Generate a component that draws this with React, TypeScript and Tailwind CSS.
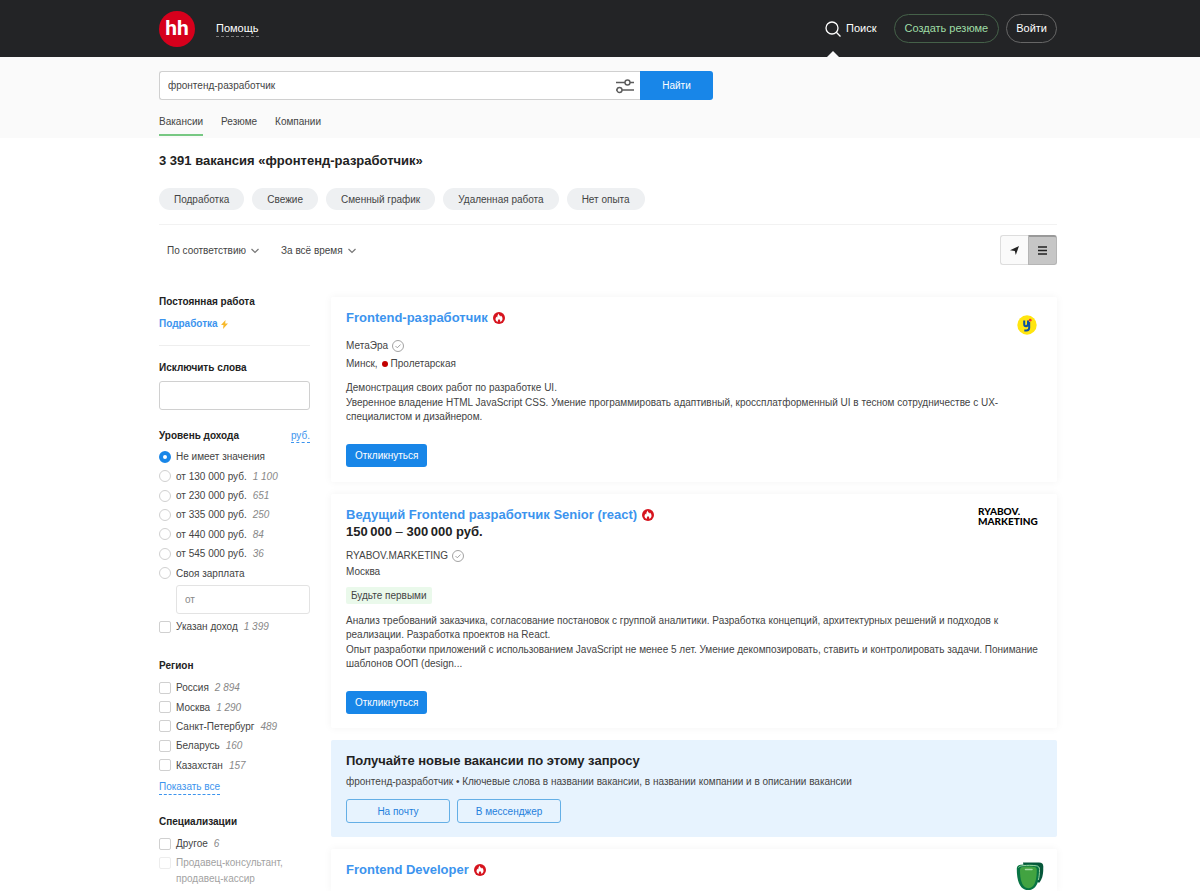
import React from "react";

type FilterItem = {
  label: string;
  count?: string;
  checked?: boolean;
};

const tabs = ["Вакансии", "Резюме", "Компании"];

const chips = ["Подработка", "Свежие", "Сменный график", "Удаленная работа", "Нет опыта"];

const incomes: FilterItem[] = [
  { label: "Не имеет значения", checked: true },
  { label: "от 130 000 руб.", count: "1 100" },
  { label: "от 230 000 руб.", count: "651" },
  { label: "от 335 000 руб.", count: "250" },
  { label: "от 440 000 руб.", count: "84" },
  { label: "от 545 000 руб.", count: "36" },
  { label: "Своя зарплата" },
];

const regions: FilterItem[] = [
  { label: "Россия", count: "2 894" },
  { label: "Москва", count: "1 290" },
  { label: "Санкт-Петербург", count: "489" },
  { label: "Беларусь", count: "160" },
  { label: "Казахстан", count: "157" },
];

const Container = ({ children, className = "" }: { children: React.ReactNode; className?: string }) => (
  <div className={`mx-auto w-full max-w-[914px] pl-4 ${className}`}>{children}</div>
);

const SearchIcon = () => (
  <svg className="size-4" viewBox="0 0 16 16" fill="none" stroke="currentColor" strokeWidth="1.3">
    <circle cx="7" cy="7" r="6" />
    <path d="M11.3 11.3 15.5 15.5" />
  </svg>
);

const SlidersIcon = () => (
  <svg className="h-4 w-[18px]" viewBox="0 0 18 16" fill="none" stroke="#5c5c5c" strokeWidth="1.4">
    <path d="M0 4.5h9M14 4.5h4M0 12h1M6 12h12" />
    <circle cx="11.5" cy="4.5" r="2.5" />
    <circle cx="3.5" cy="12" r="2.5" />
  </svg>
);

const ChevronIcon = () => (
  <svg className="size-2" viewBox="0 0 8 8" fill="none" stroke="#777" strokeWidth="1.2">
    <path d="M0.5 3 4 6.500 7.5 3" />
  </svg>
);

const FireIcon = () => (
  <svg className="size-3 shrink-0" viewBox="0 0 12 12">
    <circle cx="6" cy="6" r="6" fill="#d6141e" />
    <path
      d="M5.6 1.6c.2 1.5 1.1 2 1.9 3 .2-.3.3-.6.3-1C9 4.6 9.6 5.7 9.5 7c-.1 1.5-1 2.5-2.2 2.9.3-1.1-.2-2-1.3-3-.9.9-1.5 1.9-1.2 3C3.4 9.4 2.5 8.4 2.5 7c0-1 .5-1.8 1.2-2.5 0 .5.1.8.4 1.1C4.3 4 4.8 2.7 5.6 1.6Z"
      fill="#fff"
    />
  </svg>
);

const VerifiedIcon = () => (
  <svg className="size-3 shrink-0" viewBox="0 0 12 12" fill="none" stroke="#999" strokeWidth="0.9">
    <circle cx="6" cy="6" r="5.5" />
    <path d="M3.5 6 5.3 7.8 8.6 4.5" />
  </svg>
);

const YLogo = () => (
  <svg className="mt-[6px] mr-[5px] size-5 shrink-0" viewBox="0 0 20 20">
    <circle cx="10" cy="10" r="9.7" fill="#ffe50f" />
    <path
      d="M7.2 5.5v3.7c0 1.3.7 2 1.8 2 1.300 0 2-.8 2-2.100V5.500M12.200 7v5.800c0 1.800-1.100 2.700-2.800 2.700H7.300"
      fill="none"
      stroke="#0d4ea2"
      strokeWidth="2"
    />
    <circle cx="13.2" cy="5.2" r="1.400" fill="#ee3b2f" />
  </svg>
);

const ShieldLogo = () => (
  <svg className="mt-px -mr-0.5 size-7 shrink-0" viewBox="0 0 28 28">
    <path d="M7 .5h16c3 0 4.300 1.500 4.300 4 0 6-.3 12-4.300 16.500L8 6Z" fill="#06573a" />
    <path d="M.8 7c0-2.500 1.200-4 3.700-4.300 5-.7 10.500-.7 15.500 0 2.500.3 3.700 1.800 3.700 4.300 0 12-3 18.500-8 20.600-2.200.8-4.700.8-6.900 0C3.800 25.500.8 19 .8 7Z" fill="#087443" />
    <path d="M4 7.800C4 6.200 4.800 5.300 6.400 5c4-.6 8-.6 12 0 1.600.3 2.400 1.200 2.400 2.800 0 10-2 15.700-5.600 17.800-1.800.8-3.800.8-5.600 0C6 23.500 4 17.800 4 7.800Z" fill="#42a341" />
    <path d="M2.500 5.500c1-1.300 2.500-1.600 4.500-1.800 4.500-.5 9-.5 13.500.1 2 .3 3 1.500 3 3.700 0 4-.3 7.500-1.200 10.500" fill="none" stroke="#9bd3a3" strokeWidth="1" />
    <path d="M9.500 7.500h6.500" stroke="#a5dba5" strokeWidth="1.500" strokeLinecap="round" />
  </svg>
);

const Filter = ({ item, type, name }: { item: FilterItem; type: "radio" | "checkbox"; name: string }) => (
  <label className="flex items-center">
    <input
      type={type}
      name={name}
      defaultChecked={item.checked}
      className={
        type === "radio"
          ? "size-3 shrink-0 appearance-none rounded-full border border-[#d0d0d0] bg-white checked:border-4 checked:border-[#1886e8]"
          : "size-3 shrink-0 appearance-none rounded-xs border border-[#d0d0d0] bg-white checked:bg-[#1886e8]"
      }
    />
    <span className="ml-[5px]">{item.label}</span>
    {item.count && <span className="ml-[6px] text-[#888] italic">{item.count}</span>}
  </label>
);

const FilterTitle = ({ children }: { children: React.ReactNode }) => (
  <h3 className="leading-4 font-bold text-[#222]">{children}</h3>
);

const VacancyTitle = ({ children }: { children: React.ReactNode }) => (
  <h2 className="flex items-center gap-[5px] text-[13px] leading-[17px] font-bold">
    <a href="#" className="text-[#3c94ee]">{children}</a>
    <FireIcon />
  </h2>
);

const Company = ({ name }: { name: string }) => (
  <div className="flex items-center gap-1 leading-[18px]">
    <a href="#">{name}</a>
    <VerifiedIcon />
  </div>
);

const ApplyButton = () => (
  <button className="mt-5 h-[23px] rounded-[3px] bg-[#1886e8] px-[9px] text-white">Откликнуться</button>
);

const Header = () => (
  <header className="bg-[#232426] text-[11px] text-white">
    <Container className="flex h-[57px] items-center">
      <a href="#" className="flex size-9 items-center justify-center rounded-full bg-[#d6001c] font-['Roboto',sans-serif] text-[21px] font-bold">
        hh
      </a>
      <a href="#" className="ml-[21px] border-b border-dashed border-[#777] leading-4">Помощь</a>
      <a href="#" className="relative ml-auto flex h-full items-center gap-[5px]">
        <SearchIcon />
        Поиск
        <span className="absolute bottom-0 left-0.5 border-x-[6px] border-b-[6px] border-x-transparent border-b-[#fafafa]" />
      </a>
      <button className="ml-[17px] h-[29px] rounded-full border border-[#456149] px-[10px] text-[#9fdda5]">Создать резюме</button>
      <button className="ml-[7px] h-[29px] rounded-full border border-[#666] px-[9px]">Войти</button>
    </Container>
  </header>
);

const SearchPanel = () => (
  <section className="bg-[#fafafa]">
    <Container className="pt-[14px]">
      <form className="flex h-[29px] w-[554px]">
        <div className="flex flex-1 items-center rounded-l-[3px] border border-r-0 border-[#d0d0d0] bg-white pr-[6px]">
          <input type="search" aria-label="Поиск вакансий" defaultValue="фронтенд-разработчик" className="h-full flex-1 px-2 outline-none" />
          <button type="button" aria-label="Фильтры">
            <SlidersIcon />
          </button>
        </div>
        <button type="button" className="w-[73px] rounded-r-[3px] bg-[#1886e8] text-white">Найти</button>
      </form>
      <nav className="flex gap-[18px] pt-[14px] pb-[2px]">
        {tabs.map((tab, i) => (
          <a
            key={tab}
            href="#"
            className={i === 0 ? "border-b-2 border-[#77c883] pb-[5px] leading-[15px]" : "pb-[5px] leading-[15px]"}
          >
            {tab}
          </a>
        ))}
      </nav>
    </Container>
  </section>
);

const Toolbar = () => (
  <div className="mt-[14px] flex items-center border-t border-[#f2f2f2] pt-[10px]">
    <div className="flex items-center gap-[5px] pl-2">
      <select aria-label="Сортировка" className="appearance-none">
        <option>По соответствию</option>
      </select>
      <ChevronIcon />
    </div>
    <div className="flex items-center gap-[5px] pl-[22px]">
      <select aria-label="Период" className="appearance-none">
        <option>За всё время</option>
      </select>
      <ChevronIcon />
    </div>
    <div className="ml-auto flex h-[30px]">
      <button aria-label="На карте" className="flex w-7 items-center justify-center rounded-l-[3px] border border-r-0 border-[#ddd] bg-[#fafafa]">
        <svg className="size-[9px]" viewBox="0 0 9 9" fill="#222">
          <path d="M9 0 5.8 9 4.8 5 0 4.2Z" />
        </svg>
      </button>
      <button aria-label="Списком" className="flex w-[29px] items-center justify-center rounded-r-[3px] border border-t-2 border-[#b5b5b5] border-t-[#999] bg-[#c6c6c6]">
        <svg className="size-[9px]" viewBox="0 0 9 9" stroke="#222" strokeWidth="1.3">
          <path d="M0 1h9M0 4.5h9M0 8h9" />
        </svg>
      </button>
    </div>
  </div>
);

const Sidebar = () => (
  <aside className="w-[151px] shrink-0 pt-px">
    <FilterTitle>Постоянная работа</FilterTitle>
    <a href="#" className="mt-[6px] flex items-center gap-[3px] leading-4 font-bold text-[#3c94ee]">
      Подработка
      <svg className="h-[9px] w-[7px]" viewBox="0 0 7 9" fill="#f7b92c">
        <path d="M4.5 0 0 5h2.500L2 9 7 3.500H4.200Z" />
      </svg>
    </a>
    <div className="mt-[13px] border-t border-[#eee] pt-[14px]">
      <label>
        <span className="block leading-4 font-bold text-[#222]">Исключить слова</span>
        <input type="text" className="mt-[5px] block h-[29px] w-full rounded-[3px] border border-[#d0d0d0] bg-white px-2" />
      </label>
    </div>

    <div className="mt-[18px] flex items-center justify-between">
      <FilterTitle>Уровень дохода</FilterTitle>
      <a href="#" className="border-b border-dashed border-[#3c94ee] leading-[13px] text-[#3c94ee]">руб.</a>
    </div>
    <div className="mt-[3px] grid h-[136px] auto-rows-fr">
      {incomes.map((item) => (
        <Filter key={item.label} item={item} type="radio" name="income" />
      ))}
    </div>
    <div className="pt-[2px] pb-[3px] pl-[17px]">
      <input type="text" aria-label="Зарплата от" placeholder="от" className="block h-[29px] w-full rounded-[3px] border border-[#e3e3e3] px-2 placeholder:text-[#888]" />
    </div>
    <div className="grid h-[19px]">
      <Filter item={{ label: "Указан доход", count: "1 399" }} type="checkbox" name="income-set" />
    </div>

    <div className="mt-[22px]">
      <FilterTitle>Регион</FilterTitle>
      <div className="mt-1 grid h-[97px] auto-rows-fr">
        {regions.map((item) => (
          <Filter key={item.label} item={item} type="checkbox" name="region" />
        ))}
      </div>
      <a href="#" className="mt-[5px] inline-block border-b border-dashed border-[#3c94ee] leading-[14px] text-[#3c94ee]">Показать все</a>
    </div>

    <div className="mt-[19px]">
      <FilterTitle>Специализации</FilterTitle>
      <div className="mt-1 grid h-[19px]">
        <Filter item={{ label: "Другое", count: "6" }} type="checkbox" name="specialization" />
      </div>
      <label className="mt-[2px] flex items-start gap-[5px] leading-4 opacity-50">
        <input type="checkbox" className="mt-[2px] size-3 shrink-0 appearance-none rounded-xs border border-[#ddd]" />
        Продавец-консультант, продавец-кассир
      </label>
    </div>
  </aside>
);

const Results = () => (
  <main className="flex min-w-0 flex-1 flex-col gap-3 pt-1">
    <article className="flex rounded-xs bg-white px-[15px] pt-3 pb-[15px] shadow-[0_0_8px_rgba(0,0,0,0.05)]">
      <div className="flex-1">
        <VacancyTitle>Frontend-разработчик</VacancyTitle>
        <div className="mt-[11px]">
          <Company name="МетаЭра" />
          <p className="flex items-center leading-[18px]">
            Минск,
            <span className="mr-[3px] ml-1 size-[6px] rounded-full bg-[#c20000]" />
            Пролетарская
          </p>
        </div>
        <div className="mt-2 leading-[14px]">
          <p>Демонстрация своих работ по разработке UI.</p>
          <p className="mt-px">
            Уверенное владение HTML JavaScript CSS. Умение программировать адаптивный, кроссплатформенный UI в тесном сотрудничестве с UX-специалистом и дизайнером.
          </p>
        </div>
        <ApplyButton />
      </div>
      <YLogo />
    </article>

    <article className="rounded-xs bg-white px-[15px] pt-3 pb-[14px] shadow-[0_0_8px_rgba(0,0,0,0.05)]">
      <div className="flex items-start justify-between">
        <div>
          <VacancyTitle>Ведущий Frontend разработчик Senior (react)</VacancyTitle>
          <p className="text-[13px] leading-[17px] font-bold text-[#222]">
            150&#8201;000 <span className="font-normal">–</span> 300&#8201;000 руб.
          </p>
        </div>
        <div className="w-16 font-['Lato',sans-serif] text-[10px] leading-[10px] font-black text-black">
          <p>RYABOV.</p>
          <p>MARKETING</p>
        </div>
      </div>
      <div className="mt-[7px]">
        <Company name="RYABOV.MARKETING" />
        <p className="leading-[14px]">Москва</p>
      </div>
      <span className="mt-2 block w-fit rounded-xs bg-[#eaf9eb] px-[5px] leading-[17px]">Будьте первыми</span>
      <div className="mt-[10px] leading-[14px]">
        <p>
          Анализ требований заказчика, согласование постановок с группой аналитики. Разработка концепций, архитектурных решений и подходов к реализации. Разработка проектов на React.
        </p>
        <p className="mt-px">
          Опыт разработки приложений с использованием JavaScript не менее 5 лет. Умение декомпозировать, ставить и контролировать задачи. Понимание шаблонов ООП (design...
        </p>
      </div>
      <ApplyButton />
    </article>

    <section className="rounded-xs bg-[#e7f3fe] px-[15px] pt-3 pb-[14px]">
      <h2 className="text-[13px] leading-[18px] font-bold text-[#222]">Получайте новые вакансии по этому запросу</h2>
      <p className="mt-[5px] leading-[14px]">
        фронтенд-разработчик • Ключевые слова в названии вакансии, в названии компании и в описании вакансии
      </p>
      <div className="mt-[10px] flex gap-[7px] text-[#1f7fdc]">
        <button className="h-6 w-[104px] rounded-[3px] border border-[#64afe6]">На почту</button>
        <button className="h-6 w-[104px] rounded-[3px] border border-[#64afe6]">В мессенджер</button>
      </div>
    </section>

    <article className="flex flex-1 items-start justify-between rounded-t-xs bg-white px-[15px] pt-3 shadow-[0_0_8px_rgba(0,0,0,0.05)]">
      <VacancyTitle>Frontend Developer</VacancyTitle>
      <ShieldLogo />
    </article>
  </main>
);

const App = () => {
  return (
    <div className="flex min-h-screen flex-col bg-white font-['Liberation_Sans',Arial,sans-serif] text-[10px] text-[#444]">
      <Header />
      <SearchPanel />
      <Container className="flex flex-1 flex-col">
        <h1 className="mt-[14px] text-[13px] leading-[18px] font-bold text-[#222]">3 391 вакансия «фронтенд-разработчик»</h1>
        <div className="mt-[18px] flex flex-wrap gap-2">
          {chips.map((chip) => (
            <button key={chip} className="h-[22px] rounded-full bg-[#eef0f2] px-[15px]">{chip}</button>
          ))}
        </div>
        <Toolbar />
        <div className="mt-7 flex flex-1 gap-[21px]">
          <Sidebar />
          <Results />
        </div>
      </Container>
    </div>
  );
};

export default App;
